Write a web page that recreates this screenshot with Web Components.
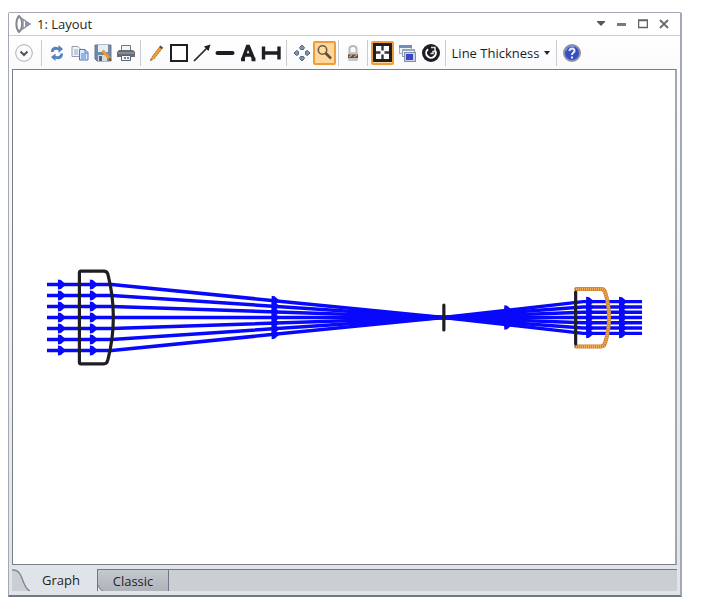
<!DOCTYPE html>
<html lang="en">
<head>
<meta charset="utf-8">
<title>1: Layout</title>
<style>
  body { margin: 0; background: #fff; color: #1e1e1e; font: 13px/20px "Open Sans", "Noto Sans", sans-serif; }
</style>
</head>
<body>
<layout-window></layout-window>

<template id="t-window">
  <style>
    :host { display: flex; box-sizing: border-box; min-height: 100vh; padding: 12px 24px 5px 8px; }
    .frame { flex: 1; display: flex; flex-direction: column; min-width: 0; border: 1px solid #a3a9b3; border-bottom: 2px solid #74777d; border-right: 2px solid #a3a9b3; border-radius: 2px 2px 0 0; background: #dfe3ea; }
    ray-canvas { flex: 1; }
    .body { flex: 1; display: flex; flex-direction: column; padding: 0 3px 4px; background: linear-gradient(#fcfcfd, #dfe3ea); }
  </style>
  <section class="frame" aria-label="1: Layout">
    <title-bar>1: Layout</title-bar>
    <tool-bar></tool-bar>
    <div class="body">
      <ray-canvas></ray-canvas>
      <tab-strip></tab-strip>
    </div>
  </section>
</template>

<template id="t-title">
  <style>
    :host { display: flex; align-items: center; height: 22px; padding: 0 6px; background: #fff; border-bottom: 1px solid #c9ced6; }
    .logo { width: 18px; height: 20px; margin-right: 4px; }
    h1 { flex: 1; margin: 0; font: inherit; }
    button { display: flex; align-items: center; justify-content: center; width: 21px; height: 20px; padding: 0; border: 0; background: none; }
  </style>
  <svg class="logo" viewBox="0 0 18 20" fill="none" stroke="#858a91"><path d="M4 2C.5 6 .5 14 4 18C8 15 8 5 4 2Z" stroke-width="2"/><path d="M6 4L15 10L6 16M8 6V14" stroke-width="1.300"/><path d="M10 6.500L16 10L10 13.500Z" fill="#8a98ab" stroke="none"/></svg>
  <h1><slot></slot></h1>
  <button aria-label="Window menu"><svg width="10" height="6"><path d="M1 0H9V1L5 5L1 1Z" fill="#55585e"/></svg></button>
  <button aria-label="Minimize"><svg width="10" height="4"><path d="M0 1H9V4H0Z" fill="#777a80"/></svg></button>
  <button aria-label="Maximize"><svg width="10" height="10"><path d="M.5 1.500H9.500V8.500H.5ZM0 1H10" fill="none" stroke="#606369" stroke-width="1.500"/></svg></button>
  <button aria-label="Close"><svg width="10" height="10"><path d="M1 1L9 9M9 1L1 9" stroke="#66696f" stroke-width="1.800"/></svg></button>
</template>

<template id="t-button">
  <style>
    :host { display: block; flex: none; }
    button { display: flex; align-items: center; justify-content: center; box-sizing: border-box; width: 23px; height: 24px; padding: 0; border: 0; background: none; color: inherit; font: inherit; }
    :host([active]) button { border: 2px solid #ee9d3b; border-radius: 2px; background: #ffd79b; }
    :host([wide]) button { width: 104px; gap: 5px; white-space: nowrap; }
  </style>
  <button><slot></slot></button>
</template>

<template id="t-tools">
  <style>
    :host { display: flex; align-items: center; height: 33px; padding: 0 3px; background: linear-gradient(#fff, #fafafc); }
    svg { display: block; flex: none; }
    .sep { flex: none; width: 1px; height: 26px; margin: 0 3px; background: #c8ccd3; }
    .first { margin-left: 6px; }
    .roomy { margin: 0 3px 0 4px; }
    .tight { margin: 0 2px; }
  </style>
  <tool-button label="Settings"><svg width="18" height="18"><circle cx="9" cy="9" r="8.300" fill="#fcfcfc" stroke="#a9acb3"/><path d="M5.500 7.500L9 11L12.500 7.500" fill="none" stroke="#55585e" stroke-width="2.200"/></svg></tool-button>
  <span class="sep first"></span>
  <tool-button label="Update"><svg width="16" height="18" fill="#5681be"><path d="M2 8C2 3 6 2 9.500 3.500V1L14 5L9.500 9V6.300C6.500 5 5 6 4.500 8Z"/><path d="M14 9.500C14 15 10 16 6.500 14.500V17L2 13L6.500 9.500V11.700C9.500 13 11 12 11.500 9.500Z"/></svg></tool-button>
  <tool-button label="Copy"><svg width="18" height="16"><path d="M1 1.500H7L9.500 4V11.500H1Z" fill="#f1f4fa" stroke="#949baa"/><path d="M3 5H7M3 7H7M3 9H7" stroke="#8ca7d2"/><path d="M8.500 4.500H14L17 7.500V15H8.500Z" fill="#dce8fb" stroke="#5377b5"/><path d="M14 4.500V8H17M10 9H15M10 11H15M10 13H15" stroke="#547fc7" fill="none"/></svg></tool-button>
  <tool-button label="Save"><svg width="18" height="18"><path d="M1 1H17V17H3L1 15Z" fill="#7188a9" stroke="#667891"/><path d="M4 1H14V8H4Z" fill="#e7edf4"/><path d="M4 11H13V17H4Z" fill="#d5dae0"/><path d="M5 12H8V17H5Z" fill="#586574"/><path d="M8.500 6.500L16 15" stroke="#f1992d" stroke-width="3"/><path d="M15 14L17 16.500" stroke="#76543a" stroke-width="2"/></svg></tool-button>
  <tool-button label="Print"><svg width="18" height="18"><path d="M4.500 7V1.500H13.500V7" fill="#f5f5f7" stroke="#73767c"/><path d="M2 6H16L18 8V13H0V8Z" fill="#696d73"/><path d="M1 9H17" stroke="#a9adb3"/><path d="M4.500 11.500H13.500V16.500H4.500Z" fill="#f3f6fb" stroke="#5e6268"/><path d="M7 13H9V15H7ZM10 13H12V15H10Z" fill="#5887bc"/></svg></tool-button>
  <span class="sep"></span>
  <tool-button label="Pencil"><svg width="16" height="18"><path d="M3 14L11 3L14 5L6 15L2 17Z" fill="#efa03e"/><path d="M4 13L12 3M6 15L13 6" stroke="#a87337" stroke-dasharray="2 1"/><path d="M11 3L12.500 1.500L15 3.500L14 5.500Z" fill="#574b43"/><path d="M2 17L3 14L5 16Z" fill="#777"/></svg></tool-button>
  <tool-button label="Rectangle"><svg width="18" height="18"><rect x="1" y="1" width="16" height="16" fill="#fff" stroke="#1e1e24" stroke-width="2"/></svg></tool-button>
  <tool-button label="Arrow"><svg width="18" height="18"><path d="M1 17L14 4" stroke="#26262c" stroke-width="1.700"/><path d="M17.500 .5L15.500 7L11 2.500Z" fill="#1e1e24"/></svg></tool-button>
  <tool-button label="Line"><svg width="20" height="18"><path d="M2.500 9H17.500" stroke="#1c1c22" stroke-width="4" stroke-linecap="round"/></svg></tool-button>
  <tool-button label="Text"><svg width="18" height="18" fill="none" stroke="#1e1e24" stroke-width="3.400"><path d="M3.500 16L8.500 2.500H9.500L15 16M5.500 11H13M2 15.500H6M12.500 15.500H16.500"/></svg></tool-button>
  <tool-button label="Dimension"><svg width="20" height="18"><path d="M2.500 2.500V15.500M18 2.500V15.500M3 9H18" fill="none" stroke="#1e1e24" stroke-width="3.400"/></svg></tool-button>
  <span class="sep roomy"></span>
  <tool-button label="Pan"><svg width="18" height="18" fill="#7895bb" stroke="#5c6672"><path d="M9 1L11.500 3.500L10.500 5.500H7.500L6.500 3.500ZM9 17L11.500 14.500L10.500 12.500H7.500L6.500 14.500ZM1 9L3.500 6.500L5.500 7.500V10.500L3.500 11.500ZM17 9L14.500 6.500L12.500 7.500V10.500L14.500 11.500Z"/></svg></tool-button>
  <tool-button label="Zoom" active><svg width="17" height="17"><circle cx="6.500" cy="6" r="4.200" fill="#ffdca0" stroke="#665c4f" stroke-width="1.600"/><path d="M9.500 9L15 14.500" stroke="#554c42" stroke-width="2.500"/></svg></tool-button>
  <span class="sep tight"></span>
  <tool-button label="Lock"><svg width="14" height="18"><path d="M3.500 9V5C3.500 1 10.500 1 10.500 5V9" fill="none" stroke="#b6b9bf" stroke-width="2"/><rect x="2" y="8" width="10" height="9" rx="1.500" fill="#c5c6c9"/><path d="M2 10.500H12V14H2Z" fill="#5b4e45"/><path d="M3 13L6 11M8 13L11 11" stroke="#e7a04b" stroke-width="1.500"/></svg></tool-button>
  <span class="sep"></span>
  <tool-button label="Fit window" active><svg width="19" height="19" viewBox="0 0 19 19"><rect x="1.500" y="1.500" width="16" height="16" fill="#fff" stroke="#1e1e24" stroke-width="3"/><path d="M9.500 3V7.500M9.500 11.500V16M3 9.500H7.500M11.500 9.500H16" stroke="#34343a" stroke-width="2.400"/></svg></tool-button>
  <span></span>
  <tool-button label="Clone window" style="margin-left: 2px"><svg width="18" height="18"><rect x=".5" y="1.500" width="12" height="8" fill="#eef2f8" stroke="#a1adbe"/><path d="M0 1H13V4H0Z" fill="#718fb8"/><rect x="3.500" y="5.500" width="12" height="7" fill="#eef2f8" stroke="#8b9bb1"/><path d="M3 5H16V7H3Z" fill="#91a7c5"/><rect x="5.500" y="8.500" width="11" height="9" fill="#c9d4e6" stroke="#828fa5"/><path d="M7 10H14V16H7Z" fill="#3a45c8"/></svg></tool-button>
  <tool-button label="Reset"><svg width="18" height="18"><circle cx="9" cy="9" r="9" fill="#1c1c22"/><path d="M6 5.200A4.800 4.800 0 1 0 12.800 6" fill="none" stroke="#fff" stroke-width="2"/><path d="M9 3.500H13V7.500H11V9.500H8.500" fill="none" stroke="#ddd" stroke-width="1.500"/></svg></tool-button>
  <span class="sep"></span>
  <tool-button wide>Line Thickness<svg width="6" height="4"><path d="M0 0H6L3 4Z" fill="#25252b"/></svg></tool-button>
  <span class="sep"></span>
  <tool-button label="Help"><svg width="18" height="18"><circle cx="9" cy="9" r="8" fill="#354ec3" stroke="#8c939e" stroke-width="2"/><path d="M3 7C4 2 9 2 12 3" stroke="#859de0" fill="none"/><path d="M6.500 7C6.500 3.500 12 4 11.500 7C11.200 8.800 9 8.500 9 11M9 12.500V14.500" fill="none" stroke="#e8edff" stroke-width="2"/></svg></tool-button>
</template>

<template id="t-canvas">
  <style>
    :host { display: flex; box-sizing: border-box; border: 1px solid #7b7e84; border-right-width: 2px; border-right-color: #a3a6ac; background: #fff; }
    svg { display: block; flex: 1; width: 100%; min-width: 0; }
    .ray { fill: none; stroke: #0808fa; stroke-width: 3.500; }
    .head { fill: #0808fa; }
    .lens { fill: none; stroke: #1e1e24; stroke-width: 3.200; stroke-linejoin: round; stroke-linecap: round; }
  </style>
  <svg viewBox="13 70 663 494" role="img" aria-label="Rays through two lenses">
    <g id="rays"></g>
    <path class="lens" d="M81 271H104Q107 271 108 274Q119 317 108 360Q107 364 104 364H81Q79.500 364 79.500 362V273Q79.500 271 81 271Z"/>
    <path class="lens" d="M444.500 305V330"/>
    <path class="lens" style="stroke:#c77e2c;stroke-width:4" d="M577 289H602Q605 289 606 292Q614 317 606 343Q605 346.500 602 346.500H577"/>
    <path class="lens" style="stroke:#f5b565;stroke-width:3;stroke-dasharray:1 1;stroke-linecap:butt" d="M577 289H602Q605 289 606 292Q614 317 606 343Q605 346.500 602 346.500H577"/>
    <path class="lens" d="M576.500 292V344"/>
  </svg>
</template>

<template id="t-tabs">
  <style>
    :host { display: flex; height: 22px; margin-top: 4px; background: #cbcfd4; }
    button { position: relative; box-sizing: border-box; padding: 0; border: 0; color: inherit; font: inherit; }
    .on { display: flex; align-items: center; width: 85px; background: #dfe3ea; }
    .on span { flex: 1; padding-right: 5px; text-align: center; }
    .off { width: 72px; border: 1px solid #6e7886; border-bottom: 0; background: linear-gradient(#c4c9cf, #afb4bb); }
    .rest { flex: 1; border-top: 1px solid #6e7886; }
    .off svg { position: absolute; left: 0; bottom: 0; }
  </style>
  <button class="on" role="tab" aria-selected="true"><svg width="18" height="22"><path d="M0 1C12 0 9 18 18 22H0Z" fill="#cbcfd4"/><path d="M0 1C12 0 9 18 18 22" fill="none" stroke="#7c838c" stroke-width="1.300"/></svg><span>Graph</span></button>
  <button class="off" role="tab" aria-selected="false">Classic<svg width="5" height="6"><path d="M0 0V6H5Q1 4 0 0Z" fill="#dfe3ea"/><path d="M0 0Q1 4 5 6" fill="none" stroke="#6e7886"/></svg></button>
  <div class="rest"></div>
</template>

<script>
  class Templated extends HTMLElement {
    constructor() {
      super();
      const source = document.getElementById(this.constructor.template);
      this.attachShadow({ mode: "open" }).append(source.content.cloneNode(true));
    }
  }
  class TitleBar extends Templated { static template = "t-title"; }
  class ToolButton extends Templated {
    static template = "t-button";
    connectedCallback() {
      const label = this.getAttribute("label");
      const button = this.shadowRoot.querySelector("button");
      if (label) button.setAttribute("aria-label", label);
      if (this.hasAttribute("active")) button.setAttribute("aria-pressed", "true");
    }
  }
  class ToolBar extends Templated { static template = "t-tools"; }
  class RayCanvas extends Templated {
    static template = "t-canvas";
    connectedCallback() {
      const axis = 317.5, focus = 444;
      let out = "";
      for (let i = -3; i <= 3; i++) {
        const left = i * 11, right = i * 5.3;
        out += `<path class="ray" d="M47 ${axis + left}H112L${focus} ${axis}L584 ${axis + right}H643"/>`;
        const heads = [[61, left], [93, left], [275, left * (focus - 275) / (focus - 112)],
          [508, right * (508 - focus) / (584 - focus)], [590, right], [623, right]];
        for (const [x, dy] of heads) {
          const y = axis + dy;
          out += `<path class="head" d="M${x - 3} ${y - 5}L${x} ${y - 4.5}L${x + 4} ${y - 1}V${y + 1}L${x} ${y + 4.5}L${x - 3} ${y + 5}Z"/>`;
        }
      }
      this.shadowRoot.getElementById("rays").innerHTML = out;
    }
  }
  class TabStrip extends Templated { static template = "t-tabs"; }
  class LayoutWindow extends Templated { static template = "t-window"; }
  customElements.define("title-bar", TitleBar);
  customElements.define("tool-button", ToolButton);
  customElements.define("tool-bar", ToolBar);
  customElements.define("ray-canvas", RayCanvas);
  customElements.define("tab-strip", TabStrip);
  customElements.define("layout-window", LayoutWindow);
</script>
</body>
</html>
